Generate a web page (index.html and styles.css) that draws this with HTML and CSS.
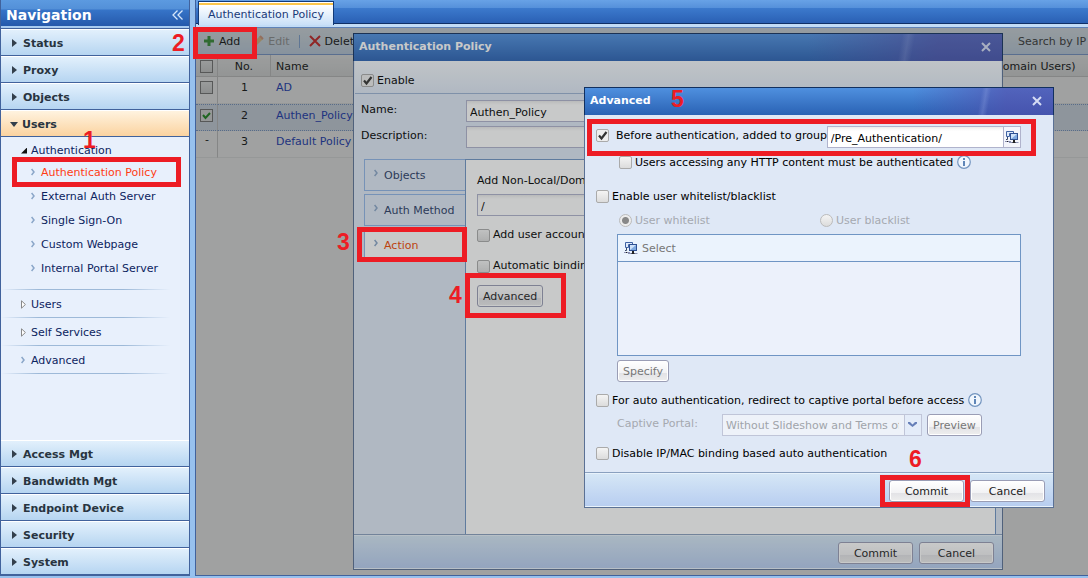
FILE: index.html
```
<!DOCTYPE html>
<html lang="en">

<head>
    <meta charset="utf-8">
    <meta name="viewport" content="width=device-width, initial-scale=1.0">
    <title>Authentication Policy</title>
    <link rel="stylesheet" href="styles.css">
</head>

<body>
    <!-- shared icons -->
    <svg class="sprite" aria-hidden="true">
        <symbol id="icon-group" viewBox="0 0 14 14">
            <path d="M1.500 1.500h7v2h-4v3h-3z" fill="#dfeafa" stroke="#3f62a4" />
            <path d="M2.500 7v2.500H1" fill="none" stroke="#3a4a68" />
            <rect x="5.500" y="3.500" width="7" height="6" fill="#7fa9e0" stroke="#2f5093" />
            <path d="M6 9V4h6z" fill="#cfe2fa" />
            <path d="M9 10v2" stroke="#222" stroke-width="2" />
            <path d="M0 11.500h6M4 12.500h9.500" stroke="#8a90b0" />
            <path d="M7.500 12.500h3M2 11.500h1" stroke="#222" />
        </symbol>
        <symbol id="icon-info" viewBox="0 0 14 14">
            <circle cx="7" cy="7" r="6.300" fill="#f0f6fd" stroke="#7395bf" stroke-width="1.200" />
            <rect x="6" y="3" width="2" height="2" fill="#5f86b8" />
            <rect x="6" y="6" width="2" height="5" fill="#5f86b8" />
        </symbol>
        <symbol id="icon-close" viewBox="0 0 10 10">
            <path d="M1 1l8 8M9 1L1 9" fill="none" stroke="currentColor" stroke-width="2" />
        </symbol>
    </svg>

    <div class="page">
        <nav class="sidebar">
            <div class="sidebar-title">
                <span>Navigation</span>
                <button type="button" class="collapse" aria-label="Collapse">
                    <svg width="12" height="10" viewBox="0 0 12 10"><path d="M5.500 .5L1 5l4.500 4.500M10.500 .5L6 5l4.500 4.500" fill="none" stroke="currentColor" stroke-width="1.300" /></svg>
                </button>
            </div>
            <button type="button" class="section">Status</button>
            <button type="button" class="section">Proxy</button>
            <button type="button" class="section">Objects</button>
            <button type="button" class="section open">Users</button>

            <div class="tree">
                <a href="#" class="branch expanded">Authentication</a>
                <ul class="leaves">
                    <li><a href="#" class="current">Authentication Policy</a></li>
                    <li><a href="#">External Auth Server</a></li>
                    <li><a href="#">Single Sign-On</a></li>
                    <li><a href="#">Custom Webpage</a></li>
                    <li><a href="#">Internal Portal Server</a></li>
                </ul>
                <a href="#" class="branch folded">Users</a>
                <a href="#" class="branch folded">Self Services</a>
                <a href="#" class="branch single">Advanced</a>
            </div>

            <button type="button" class="section">Access Mgt</button>
            <button type="button" class="section">Bandwidth Mgt</button>
            <button type="button" class="section">Endpoint Device</button>
            <button type="button" class="section">Security</button>
            <button type="button" class="section">System</button>
        </nav>

        <main class="main">
            <div class="tabs">
                <button type="button" class="tab">Authentication Policy</button>
            </div>

            <div class="workspace">
                <div class="toolbar">
                    <button type="button" class="tool">
                        <svg width="12" height="12" viewBox="0 0 12 12"><path d="M6 1v10M1 6h10" stroke="#2f9a2f" stroke-width="3" /></svg>
                        Add
                    </button>
                    <button type="button" class="tool" disabled>
                        <svg width="12" height="12" viewBox="0 0 12 12"><path d="M1 11l1-4 6-6 3 3-6 6z" fill="#f0c98a" /><path d="M8 1l3 3" stroke="#e8a080" stroke-width="2" /></svg>
                        Edit
                    </button>
                    <span class="divider"></span>
                    <button type="button" class="tool">
                        <svg width="12" height="12" viewBox="0 0 12 12"><path d="M1 1l10 10M11 1L1 11" stroke="#e01818" stroke-width="2" /></svg>
                        Delete
                    </button>
                    <span class="search-label">Search by IP</span>
                </div>

                <table class="grid">
                    <thead>
                        <tr>
                            <th class="col-check"><input type="checkbox" aria-label="Select all"></th>
                            <th class="col-no">No.</th>
                            <th>Name</th>
                            <th class="col-users">(Domain Users)</th>
                        </tr>
                    </thead>
                    <tbody>
                        <tr>
                            <td class="col-check"><input type="checkbox" aria-label="Select AD"></td>
                            <td class="col-no">1</td>
                            <td><a href="#">AD</a></td>
                            <td></td>
                        </tr>
                        <tr class="selected">
                            <td class="col-check"><input type="checkbox" aria-label="Select Authen_Policy" checked></td>
                            <td class="col-no">2</td>
                            <td><a href="#">Authen_Policy</a></td>
                            <td></td>
                        </tr>
                        <tr>
                            <td class="col-check col-dash">-</td>
                            <td class="col-no">3</td>
                            <td><a href="#">Default Policy</a></td>
                            <td></td>
                        </tr>
                    </tbody>
                </table>

                <div class="mask"></div>

                <section class="window policy-window">
                    <header class="window-title">
                        <span>Authentication Policy</span>
                        <button type="button" class="close" aria-label="Close"><svg width="10" height="10"><use href="#icon-close" /></svg></button>
                    </header>
                    <div class="enable-row">
                        <label class="check"><input type="checkbox" checked>Enable</label>
                    </div>
                    <div class="fields">
                        <label for="policyName">Name:</label>
                        <input type="text" id="policyName" value="Authen_Policy">
                        <label for="policyDesc">Description:</label>
                        <input type="text" id="policyDesc">
                    </div>
                    <div class="policy-body">
                        <div class="steps">
                            <button type="button" class="step">Objects</button>
                            <button type="button" class="step">Auth Method</button>
                            <button type="button" class="step active">Action</button>
                        </div>
                        <div class="action-panel">
                            <label for="userGroup">Add Non-Local/Domain Users to Group:</label>
                            <input type="text" id="userGroup" value="/">
                            <label class="check"><input type="checkbox">Add user account to group</label>
                            <label class="check"><input type="checkbox">Automatic binding</label>
                            <button type="button" class="btn">Advanced</button>
                        </div>
                    </div>
                    <footer class="window-footer">
                        <button type="button" class="btn wide">Commit</button>
                        <button type="button" class="btn wide">Cancel</button>
                    </footer>
                </section>

                <div class="mask"></div>

                <section class="window advanced-window">
                    <header class="window-title">
                        <span>Advanced</span>
                        <button type="button" class="close" aria-label="Close"><svg width="10" height="10"><use href="#icon-close" /></svg></button>
                    </header>
                    <div class="options">
                        <div class="option-row group-row">
                            <label class="check" for="preAuth"><input type="checkbox" id="preAuth" checked>Before authentication, added to group</label>
                            <div class="picker">
                                <input type="text" value="/Pre_Authentication/" aria-label="Group">
                                <button type="button" aria-label="Choose group"><svg width="14" height="14"><use href="#icon-group" /></svg></button>
                            </div>
                        </div>
                        <div class="option-row nested">
                            <label class="check"><input type="checkbox">Users accessing any HTTP content must be authenticated</label>
                            <svg class="info" width="14" height="14"><use href="#icon-info" /></svg>
                        </div>

                        <div class="option-row list-row">
                            <label class="check"><input type="checkbox">Enable user whitelist/blacklist</label>
                        </div>
                        <div class="option-row nested radios">
                            <label class="check"><input type="radio" name="listType" checked disabled>User whitelist</label>
                            <label class="check"><input type="radio" name="listType" disabled>User blacklist</label>
                        </div>
                        <div class="user-list">
                            <button type="button" disabled><svg width="14" height="14"><use href="#icon-group" /></svg>Select</button>
                            <div class="user-list-body"></div>
                        </div>
                        <button type="button" class="btn specify" disabled>Specify</button>

                        <div class="option-row">
                            <label class="check"><input type="checkbox">For auto authentication, redirect to captive portal before access</label>
                            <svg class="info" width="14" height="14"><use href="#icon-info" /></svg>
                        </div>
                        <div class="option-row portal-row">
                            <label for="portal">Captive Portal:</label>
                            <select id="portal" disabled>
                                <option>Without Slideshow and Terms of Use</option>
                            </select>
                            <button type="button" class="btn" disabled>Preview</button>
                        </div>
                        <div class="option-row">
                            <label class="check"><input type="checkbox">Disable IP/MAC binding based auto authentication</label>
                        </div>
                    </div>
                    <footer class="window-footer">
                        <button type="button" class="btn wide">Commit</button>
                        <button type="button" class="btn wide">Cancel</button>
                    </footer>
                </section>
            </div>
        </main>

        <!-- numbered walkthrough marks -->
        <div class="mark mark-1"></div><span class="num num-1">1</span>
        <div class="mark mark-2"></div><span class="num num-2">2</span>
        <div class="mark mark-3"></div><span class="num num-3">3</span>
        <div class="mark mark-4"></div><span class="num num-4">4</span>
        <div class="mark mark-5"></div><span class="num num-5">5</span>
        <div class="mark mark-6"></div><span class="num num-6">6</span>
    </div>
</body>

</html>
```

FILE: styles.css
```
* {
    box-sizing: border-box;
}

body {
    margin: 0;
    background-color: #97c1ee;
}

body,
button,
input,
select {
    font-family: "DejaVu Sans", Verdana, sans-serif;
    font-size: 11px;
    color: #000;
}

button {
    margin: 0;
    padding: 0;
    border: none;
    background: none;
    cursor: pointer;
}

a {
    color: #0c2460;
    text-decoration: none;
}

.sprite {
    display: none;
}

.page {
    position: relative;
    display: flex;
    gap: 5px;
    height: 100vh;
    padding-bottom: 2px;
    overflow: hidden;
}

/* sidebar */
.sidebar {
    display: flex;
    flex-direction: column;
    flex: 0 0 190px;
    border: 1px solid #41629c;
    border-top: none;
    background-color: #e8f0fc;
}

.sidebar-title {
    display: flex;
    align-items: center;
    justify-content: space-between;
    height: 29px;
    padding: 1px 5px 0 5px;
    border-bottom: 1px solid #41629c;
    background: linear-gradient(#5c9ae0 0, #5390d8 9px, #3674c8 10px, #2559ab 26px, #a9cbf0 26px);
    color: #fff;
    font-size: 14px;
    font-weight: bold;
}

.collapse {
    display: flex;
    color: #d5e6fa;
}

.section {
    display: flex;
    align-items: center;
    gap: 6px;
    height: 27px;
    padding: 1px 0 0 11px;
    border-top: 1px solid #fff;
    border-bottom: 1px solid #41629c;
    background: linear-gradient(#e2f0fc, #b6d5f1);
    color: #283440;
    font-weight: bold;
    text-align: left;
}

.section::before {
    content: "";
    border: 4px solid transparent;
    border-left: 5px solid #333f4c;
    border-right: none;
}

.section.open {
    gap: 4px;
    padding-left: 9px;
    background: linear-gradient(#fff3df, #fbd3a0);
}

.section.open::before {
    border: 4px solid transparent;
    border-top: 5px solid #333f4c;
    border-bottom: none;
}

.tree {
    flex: 1;
    padding-top: 4px;
    overflow: hidden;
}

.branch {
    display: flex;
    align-items: center;
    gap: 5px;
    height: 28px;
    padding-left: 20px;
    background: linear-gradient(90deg, transparent, #9db9d8 20%, #9db9d8 65%, transparent 90%) bottom / 100% 1px no-repeat;
}

.branch.expanded {
    height: 19px;
    gap: 4px;
    background: none;
}

.branch::before {
    content: "";
    width: 5px;
    height: 9px;
}

.branch.expanded::before {
    width: 6px;
    height: 6px;
    background-color: #111;
    clip-path: polygon(100% 0, 100% 100%, 0 100%);
}

.branch.folded::before {
    background: url("data:image/svg+xml,%3Csvg xmlns='http://www.w3.org/2000/svg' width='5' height='9'%3E%3Cpath d='M.5.800L4.400 4.500.500 8.200z' fill='white' stroke='%23888'/%3E%3C/svg%3E") no-repeat;
}

.branch.single::before,
.leaves a::before,
.step::before {
    content: "";
    width: 4px;
    height: 8px;
    background: url("data:image/svg+xml,%3Csvg xmlns='http://www.w3.org/2000/svg' width='4' height='8'%3E%3Cpath d='M.6 1L3 4 .6 7' fill='none' stroke='%238aa6c8' stroke-width='1.500'/%3E%3C/svg%3E") no-repeat;
}

.branch.single::before {
    margin-right: 1px;
}

.leaves {
    margin: 0;
    padding: 0 0 10px;
    list-style: none;
    background: linear-gradient(90deg, transparent, #9db9d8 20%, #9db9d8 65%, transparent 90%) bottom / 100% 1px no-repeat;
}

.leaves a {
    display: flex;
    align-items: center;
    gap: 6px;
    height: 24px;
    padding-left: 30px;
}

.leaves .current {
    color: #ff3c14;
}

/* main area */
.main {
    display: flex;
    flex-direction: column;
    flex: 1;
    min-width: 0;
    border-left: 1px solid #41629c;
    border-bottom: 1px solid #41629c;
}

.tabs {
    height: 28px;
    padding: 1px 2px 0;
    border-bottom: 1px solid #5f83b8;
    background: linear-gradient(#68a2e6 0, #5590da 8px, #3c7acd 8px, #2a60b4 23px, #0f2f66 23px, #0f2f66 24px, #c2dcf6 24px);
}

.tab {
    height: 24px;
    padding: 1px 9px 0;
    border: 1px solid #123a78;
    border-bottom: none;
    background: linear-gradient(#fff 0, #fff 1px, #fcc64c 1px, #fcc64c 3px, #fff 3px, #c9e0f8);
    color: #1a3a78;
}

.workspace {
    position: relative;
    flex: 1;
    overflow: hidden;
    background-color: #fff;
}

.toolbar {
    display: flex;
    align-items: center;
    height: 27px;
    padding-left: 7px;
    border-bottom: 1px solid #7ba0dd;
    background: linear-gradient(#eef6fc, #d2e4f8);
}

.tool {
    display: flex;
    align-items: center;
    gap: 4px;
    margin-right: 12px;
}

.tool:disabled {
    margin-right: 9px;
    color: #999;
}

.divider {
    width: 1px;
    height: 13px;
    margin-right: 9px;
    background-color: #86aee6;
}

.search-label {
    width: 70px;
    margin-left: auto;
    color: #333;
    white-space: nowrap;
    overflow: hidden;
}

.grid {
    width: 100%;
    border-collapse: separate;
    border-spacing: 0;
    table-layout: fixed;
}

.grid th,
.grid td {
    height: 27px;
    padding: 0 5px 5px;
    border-bottom: 1px solid #ededed;
    text-align: left;
    font-weight: normal;
    white-space: nowrap;
}

.grid th {
    height: 22px;
    padding: 2px 5px 0;
    border-right: 1px solid #ccc;
    border-bottom-color: #ccc;
    background: linear-gradient(#fafafa, #e8e8e8);
}

.grid .col-check {
    width: 22px;
    padding-left: 4px;
    padding-right: 0;
    border-right: 1px solid #ccc;
}

.grid .col-dash {
    padding-left: 9px;
    padding-bottom: 9px;
}

.grid .col-no {
    width: 53px;
    text-align: center;
}

.grid .col-users {
    width: 103px;
    border-right: none;
}

.grid a {
    color: #0b30c0;
}

.grid .selected td {
    border-top: 1px dotted #7b9bd0;
    border-bottom: 1px dotted #7b9bd0;
    background-color: #dfe8f6;
}

.grid input[type="checkbox"] {
    display: block;
    border: 1px solid #777;
    border-radius: 0;
    background-color: #eee;
}

.grid input[type="checkbox"]:checked {
    background-image: url("data:image/svg+xml,%3Csvg xmlns='http://www.w3.org/2000/svg' width='11' height='11'%3E%3Cpath d='M2 5l2.500 3L9 3' fill='none' stroke='%23109010' stroke-width='2'/%3E%3C/svg%3E");
}

.mask {
    position: absolute;
    inset: 0;
    background-color: rgba(53, 55, 57, 0.270);
}

/* form controls */
input[type="checkbox"],
input[type="radio"] {
    flex: none;
    appearance: none;
    width: 13px;
    height: 13px;
    margin: 0;
    border: 1px solid #aaa;
    border-radius: 2px;
    background: linear-gradient(#f4f4f4, #dcdcdc) no-repeat;
}

input[type="checkbox"]:checked {
    background: #eee url("data:image/svg+xml,%3Csvg xmlns='http://www.w3.org/2000/svg' width='11' height='11'%3E%3Cpath d='M2 5.500l2.500 3L9.500 2' fill='none' stroke='%23333' stroke-width='2.200'/%3E%3C/svg%3E") no-repeat;
}

input[type="radio"] {
    border-color: #bbb;
    border-radius: 50%;
}

input[type="radio"]:checked {
    background: radial-gradient(#888 3px, #ececec 4px);
}

input[type="text"] {
    height: 22px;
    padding: 2px 3px 0;
    border: 1px solid #b0b3cc;
    border-radius: 0;
    background: linear-gradient(#ececec, #fff 4px);
}

.check {
    display: flex;
    align-items: center;
    gap: 3px;
    height: 18px;
    white-space: nowrap;
}

.check:has(:disabled) {
    color: #a5a9b0;
}

.btn {
    height: 22px;
    padding: 0 5px;
    border: 1px solid #9a9db5;
    border-radius: 3px;
    background: linear-gradient(#fff, #f2f2f4 60%, #e2e2e6 60%, #eee);
    box-shadow: inset 0 0 0 1px #fff;
    color: #222;
}

.btn:disabled {
    color: #777;
}

.btn.wide {
    width: 75px;
}

/* windows */
.window {
    position: absolute;
    display: flex;
    flex-direction: column;
    border: 1px solid #5b7195;
    background-color: #dfe8f6;
}

.window-title {
    display: flex;
    align-items: center;
    justify-content: space-between;
    height: 28px;
    margin: -1px -1px 0;
    padding: 0 11px 2px 5px;
    border: 1px solid #12305f;
    border-bottom: none;
    background: linear-gradient(100deg, transparent 84%, rgba(160, 180, 235, 0.250) 85%, transparent 86%),
        linear-gradient(90deg, transparent 70%, rgba(84, 76, 170, 0.650) 90%),
        linear-gradient(#4f90df, #2a62b4);
    color: #fff;
    font-weight: bold;
}

.close {
    display: flex;
    color: #d5dcf4;
}

.window-footer {
    display: flex;
    justify-content: flex-end;
    gap: 6px;
    padding: 7px 8px 5px;
    border-top: 1px solid #8aa0bf;
    background: linear-gradient(#d6e7f6, #b7cdf0);
    box-shadow: inset 0 1px 0 #e8f2fb, inset 0 -1px 0 #e8f2fb;
}

.policy-window {
    left: 157px;
    top: 5px;
    width: 650px;
}

.enable-row {
    padding: 10px 6px 4px;
    margin: 0 1px 6px;
    border-bottom: 1px solid #9cb3d4;
    background: linear-gradient(#f4f8fc, #dfe8f6);
}

.fields {
    display: grid;
    grid-template-columns: 105px 1fr;
    gap: 4px 0;
    padding: 0 7px;
}

.fields label {
    line-height: 20px;
}

.policy-body {
    display: flex;
    height: 375px;
    margin-top: 11px;
    padding: 0 6px 0 10px;
}

.steps {
    display: flex;
    flex-direction: column;
    gap: 3px;
    width: 101px;
}

.step {
    display: flex;
    align-items: center;
    gap: 6px;
    height: 32px;
    padding-left: 9px;
    border: 1px solid #8fb4e6;
    border-right: none;
    color: #2a3c66;
}

.step::before {
    margin-bottom: 4px;
}

.step.active {
    margin-right: -1px;
    background-color: #fff;
    color: #f04800;
}

.action-panel {
    display: flex;
    flex-direction: column;
    align-items: flex-start;
    flex: 1;
    padding: 12px 11px 0;
    border: 1px solid #6f95c4;
    border-bottom: none;
    background-color: #fff;
}

.action-panel > label {
    line-height: 18px;
}

.action-panel input[type="text"] {
    width: 260px;
    margin: 4px 0 10px;
}

.action-panel .check + .check {
    margin-top: 13px;
}

.action-panel .btn {
    margin-top: 10px;
}

.advanced-window {
    left: 388px;
    top: 59px;
    width: 470px;
}

.options {
    display: flex;
    flex-direction: column;
    padding: 11px 32px 10px 11px;
}

.option-row {
    display: flex;
    align-items: flex-start;
}

.group-row {
    margin-bottom: 5px;
}

.group-row .check {
    gap: 7px;
}

.picker {
    display: flex;
    flex: 1;
}

.picker input {
    flex: 1;
    min-width: 0;
}

.picker button {
    display: flex;
    align-items: center;
    justify-content: center;
    width: 17px;
    border: 1px solid #b0b3cc;
    border-left: none;
    background-color: #f4f5fb;
}

.nested {
    padding-left: 23px;
}

.info {
    margin: 2px 0 0 4px;
}

.list-row {
    margin: 16px 0 6px;
}

.radios {
    display: grid;
    grid-template-columns: 1fr 1fr;
}

.user-list {
    margin: 5px 0 4px 21px;
    border: 1px solid #6f95c4;
    background-color: #ecf1fb;
}

.user-list button {
    display: flex;
    align-items: center;
    gap: 4px;
    width: 100%;
    height: 27px;
    padding-left: 6px;
    border-bottom: 1px solid #6f95c4;
    background-color: #ebf3fd;
    color: #777;
}

.user-list-body {
    height: 93px;
}

.specify {
    align-self: flex-start;
    margin: 0 0 9px 21px;
}

.portal-row {
    margin: 5px 0 8px;
    padding-left: 21px;
}

.portal-row label {
    width: 105px;
    line-height: 20px;
    color: #a5a9b0;
}

.portal-row select {
    width: 200px;
    height: 22px;
    margin-right: 5px;
    padding: 0 22px 0 3px;
    appearance: none;
    border: 1px solid #c0c5d8;
    border-radius: 0;
    background: #eef2f9 url("data:image/svg+xml,%3Csvg xmlns='http://www.w3.org/2000/svg' width='17' height='20'%3E%3Cpath fill='%23e4ecf9' d='M0 0h17v20H0z'/%3E%3Cpath d='M.5 0v20' stroke='%23c0c5d8'/%3E%3Cpath d='M4 7h2l2.500 2.500L11 7h2v1.500L8.500 12 4 8.500z' fill='%23667fb8'/%3E%3C/svg%3E") right top no-repeat;
    color: #a0a4aa;
    opacity: 1;
}

/* walkthrough marks */
.mark {
    position: absolute;
    border: 5px solid #ed1c24;
    pointer-events: none;
}

.num {
    position: absolute;
    color: #ed1c24;
    font-family: "Liberation Sans", Arial, sans-serif;
    font-size: 23px;
    font-weight: bold;
    line-height: 24px;
}

.mark-1 { left: 12px; top: 157px; width: 169px; height: 30px; }
.mark-2 { left: 193px; top: 27px; width: 64px; height: 32px; }
.mark-3 { left: 357px; top: 227px; width: 110px; height: 35px; }
.mark-4 { left: 465px; top: 273px; width: 101px; height: 45px; }
.mark-5 { left: 587px; top: 119px; width: 449px; height: 37px; }
.mark-6 { left: 880px; top: 475px; width: 90px; height: 32px; }

.num-1 { left: 83px; top: 128px; }
.num-2 { left: 172px; top: 31px; }
.num-3 { left: 337px; top: 230px; }
.num-4 { left: 449px; top: 283px; }
.num-5 { left: 671px; top: 87px; }
.num-6 { left: 909px; top: 447px; }
```
